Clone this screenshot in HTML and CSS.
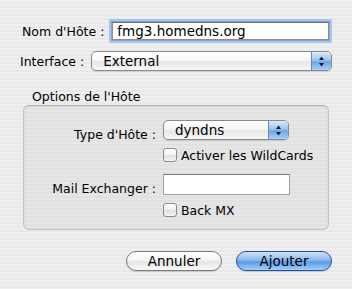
FILE: index.html
```html
<!DOCTYPE html>
<html>
<head>
<meta charset="utf-8">
<link rel="stylesheet" href="styles.css">
</head>
<body>
<div class="dialog">
  <div class="row row-host">
    <span class="label">Nom d'Hôte :</span>
    <div class="textfield focused">fmg3.homedns.org</div>
  </div>
  <div class="row row-iface">
    <span class="label">Interface :</span>
    <div class="popup wide"><span class="popup-text">External</span><span class="popup-arrows"><svg width="7" height="11" viewBox="0 0 7 11"><path d="M3.5 0.5 L6 4 H1 Z M3.5 10.5 L6 7 H1 Z" fill="#0d1a33"/></svg></span></div>
  </div>
  <div class="group-title">Options de l'Hôte</div>
  <div class="group">
    <div class="grid">
      <span class="label">Type d'Hôte :</span>
      <div class="popup small"><span class="popup-text">dyndns</span><span class="popup-arrows"><svg width="7" height="11" viewBox="0 0 7 11"><path d="M3.5 0.5 L6 4 H1 Z M3.5 10.5 L6 7 H1 Z" fill="#0d1a33"/></svg></span></div>
      <span></span>
      <label class="check"><span class="box"></span>Activer les WildCards</label>
      <span class="label">Mail Exchanger :</span>
      <div class="textfield plain"></div>
      <span></span>
      <label class="check"><span class="box"></span>Back MX</label>
    </div>
  </div>
  <div class="buttons">
    <button class="btn">Annuler</button>
    <button class="btn default">Ajouter</button>
  </div>
</div>
</body>
</html>
```
FILE: styles.css
```css
html, body {
  margin: 0;
  padding: 0;
}
body {
  width: 352px;
  height: 289px;
  overflow: hidden;
  font-family: "DejaVu Sans", "Liberation Sans", sans-serif;
  font-size: 12.5px;
  color: #000;
  background: repeating-linear-gradient(to bottom, #efefef 0 2px, #e9e9e9 2px 4px);
}
.dialog {
  padding-top: 20px;
}
.row {
  display: flex;
  align-items: center;
}
.row-host {
  padding-left: 22px;
  padding-right: 20px;
  height: 22px;
}
.row-host .label {
  margin-right: 5px;
}
.row-iface {
  margin-top: 9px;
  padding-left: 20px;
  padding-right: 20px;
  height: 20px;
}
.row-iface .label {
  margin-right: 7px;
}
.label {
  white-space: nowrap;
  text-align: right;
}
.textfield {
  box-sizing: border-box;
  background: #fff;
  border: 1px solid #8e8e8e;
  border-top-color: #6e6e6e;
  font-size: 13.5px;
  line-height: 16px;
  padding: 0 4px;
}
.textfield.focused {
  flex: 1;
  height: 18px;
  margin: 2px 3px;
  box-shadow: 0 0 0 1px #7fa3d6, 0 0 0 3px #a9c6ec;
  line-height: 16px;
}
.textfield.plain {
  width: 127px;
  height: 21px;
  border-color: #a0a0a0;
  border-top-color: #7a7a7a;
}
.popup {
  box-sizing: border-box;
  display: flex;
  height: 20px;
  border: 1px solid #8a8a8a;
  border-radius: 5px;
  background: linear-gradient(to bottom, #ffffff 0%, #f6f6f6 45%, #e6e6e6 55%, #f8f8f8 100%);
  overflow: hidden;
  box-shadow: 0 1px 1px rgba(0,0,0,0.12);
}
.popup.wide {
  flex: 1;
}
.popup.small {
  width: 126px;
}
.popup-text {
  flex: 1;
  padding-left: 11px;
  font-size: 13.5px;
  line-height: 18px;
}
.popup-arrows {
  width: 19px;
  display: flex;
  align-items: center;
  justify-content: center;
  border-left: 1px solid #6d86b3;
  background: linear-gradient(to bottom, #dceafa 0%, #9cc3ef 45%, #6fa4e6 55%, #a6d0fa 100%);
}
.group-title {
  margin-top: 19px;
  padding-left: 32px;
  height: 14px;
  line-height: 14px;
}
.group {
  box-sizing: border-box;
  margin: 1px 23px 0 23px;
  height: 125px;
  border: 1px solid #c4c4c4;
  border-top-color: #aeaeae;
  border-radius: 6px;
  background: repeating-linear-gradient(to bottom, #e6e6e6 0 2px, #e1e1e1 2px 4px);
  box-shadow: inset 0 1px 2px rgba(0,0,0,0.08);
  padding-top: 14px;
}
.grid {
  display: grid;
  grid-template-columns: 132px auto;
  column-gap: 7px;
  align-items: center;
  justify-items: start;
}
.grid .label {
  justify-self: end;
}
.grid .popup.small {
  margin-bottom: 8px;
}
.check {
  display: flex;
  align-items: center;
  height: 14px;
}
.grid .check:first-of-type {
  margin-bottom: 12px;
}
.grid .textfield.plain {
  margin-bottom: 8px;
}
.box {
  box-sizing: border-box;
  width: 14px;
  height: 14px;
  margin-right: 4px;
  border: 1px solid #8c8c8c;
  border-radius: 3px;
  background: linear-gradient(to bottom, #ffffff 0%, #f0f0f0 50%, #dedede 55%, #f6f6f6 100%);
}
.buttons {
  display: flex;
  justify-content: flex-end;
  gap: 14px;
  padding-right: 20px;
  margin-top: 21px;
}
.btn {
  box-sizing: border-box;
  width: 96px;
  height: 20px;
  border-radius: 10px;
  border: 1px solid #7b7b7b;
  font-family: "DejaVu Sans", "Liberation Sans", sans-serif;
  font-size: 13.5px;
  line-height: 17px;
  padding: 0;
  color: #000;
  background: linear-gradient(to bottom, #ffffff 0%, #f4f4f4 45%, #e4e4e4 55%, #fafafa 100%);
  box-shadow: 0 1px 1px rgba(0,0,0,0.15);
}
.btn.default {
  border-color: #2c4f8f;
  background: linear-gradient(to bottom, #cfe2f9 0%, #8ab8ee 45%, #5c9ae6 55%, #9fd0fb 100%);
}
```
